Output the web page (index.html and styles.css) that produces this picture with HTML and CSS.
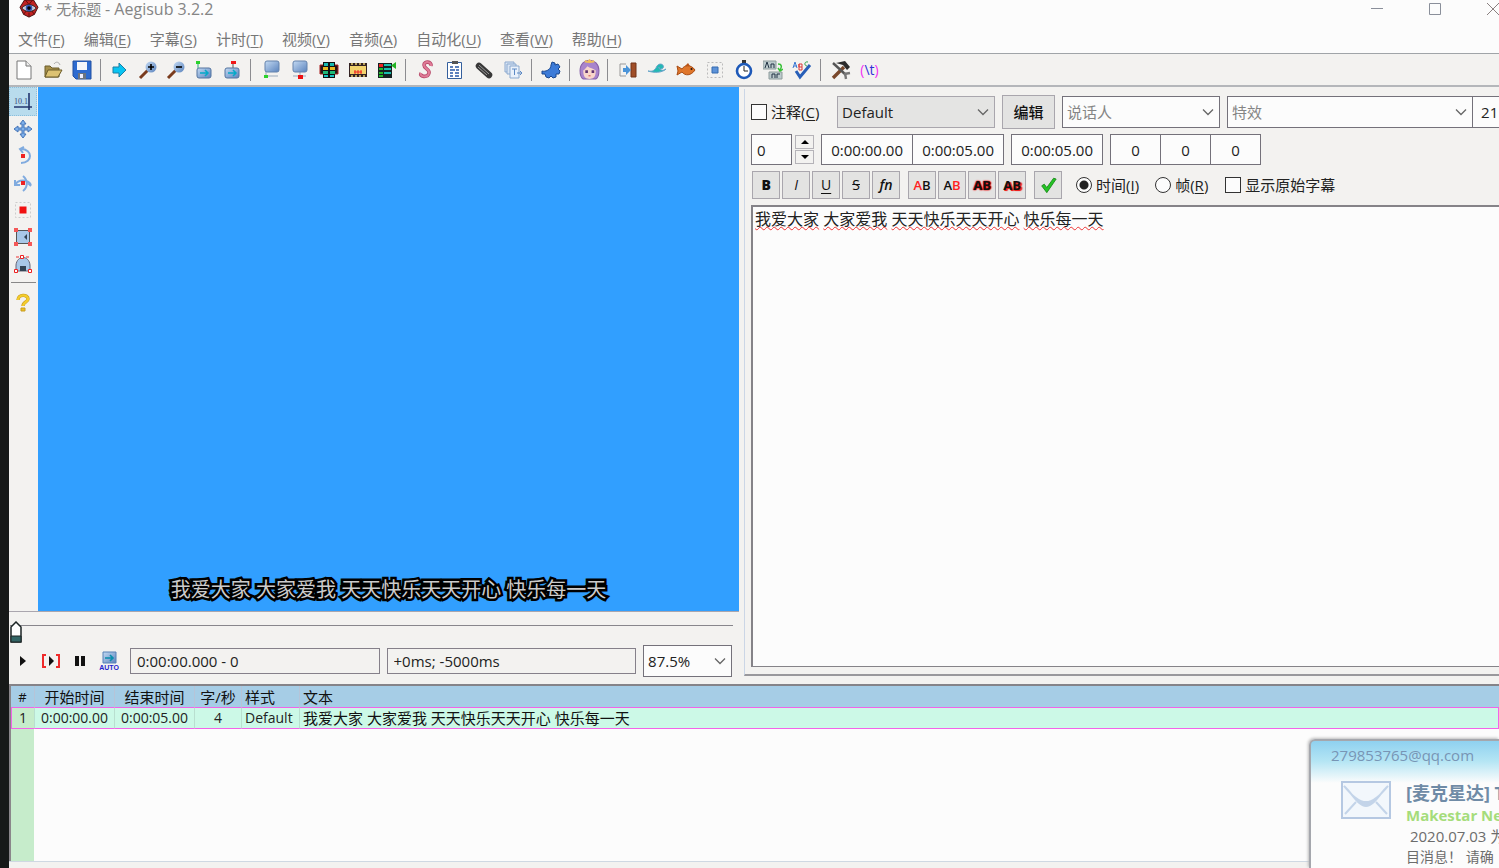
FILE: index.html
```html
<!DOCTYPE html>
<html lang="zh-CN">
<head>
<meta charset="utf-8">
<title>无标题 - Aegisub 3.2.2</title>
<link rel="stylesheet" href="styles.css">
</head>
<body>
<svg class="defs" aria-hidden="true">
  <defs>
    <linearGradient id="steel" x1="0" y1="0" x2="1" y2="1"><stop offset="0" stop-color="#c4daf3"/><stop offset="1" stop-color="#5a83bd"/></linearGradient>
    <symbol id="chev" viewBox="0 0 12 12"><path d="M1 3.5l5 5 5-5" fill="none" stroke="#666" stroke-width="1.3"/></symbol>
  </defs>
</svg>
<div class="window">
  <header class="titlebar">
    <svg class="app-icon" viewBox="0 0 20 20"><path d="M5 0h10l5 8-4 8-6 3-6-3-4-8z" fill="#c02222" stroke="#3a0a0a"/><path d="M6 0l4 5 4-5M4 16l3-4M16 16l-3-4M10 19v-5" stroke="#5c0d0d" fill="none"/><path d="M2 9c4-5 12-5 16 0-4 5-12 5-16 0z" fill="#c9c9d8" stroke="#222"/><circle cx="10" cy="9" r="3.600" fill="#3158b8"/><circle cx="10" cy="9" r="2" fill="#050505"/></svg>
    <h1 class="title">* 无标题 <span>- Aegisub 3.2.2</span></h1>
    <div class="caption-buttons">
      <button aria-label="最小化"><svg viewBox="0 0 12 12"><path d="M0 5.500h12" stroke="#8a8f9a"/></svg></button>
      <button aria-label="最大化"><svg viewBox="0 0 12 12"><path d="M.5.5h11v11H.5z" fill="none" stroke="#8a8f9a"/></svg></button>
      <button aria-label="关闭"><svg viewBox="0 0 12 12"><path d="M0 0l12 12M12 0L0 12" stroke="#8a8080"/></svg></button>
    </div>
  </header>
  <nav class="menubar">
    <button>文件(<u>F</u>)</button><button>编辑(<u>E</u>)</button><button>字幕(<u>S</u>)</button><button>计时(<u>T</u>)</button><button>视频(<u>V</u>)</button><button>音频(<u>A</u>)</button><button>自动化(<u>U</u>)</button><button>查看(<u>W</u>)</button><button>帮助(<u>H</u>)</button>
  </nav>
  <div class="toolbar" role="toolbar">
    <div class="group">
      <button aria-label="新建"><svg viewBox="0 0 20 20"><path d="M3 1h9l5 5v13H3z" fill="#fff" stroke="#777"/><path d="M12 1v5h5" fill="#eee" stroke="#777"/></svg></button>
      <button aria-label="打开"><svg viewBox="0 0 20 20"><path d="M2 17V6h5l2 2h7v9z" fill="#a58f4a" stroke="#6b5c2a"/><path d="M5 10h14l-4 7H2z" fill="#dcc272" stroke="#6b5c2a"/><path d="M11 4c2-3 5-2 6 1" fill="none" stroke="#aaa"/></svg></button>
      <button aria-label="保存"><svg viewBox="0 0 20 20"><path d="M1 1h18v18H4l-3-3z" fill="#2d6bd0" stroke="#2350a0"/><path d="M5 2h10v8H5z" fill="#f4f6fa"/><path d="M6 13h8v6H6z" fill="#6b7480"/><path d="M8 14h3v4H8z" fill="#eef"/></svg></button>
    </div>
    <i class="sep"></i>
    <div class="group compact">
      <button aria-label="跳转"><svg viewBox="0 0 20 20"><path d="M3 7h6V3l7 7-7 7v-4H3z" fill="#08c4f2" stroke="#1b7fa4"/></svg></button>
      <button aria-label="放大"><svg viewBox="0 0 20 20"><path d="M2 18l8-8" stroke="#7a3b1d" stroke-width="3"/><circle cx="13" cy="7" r="5.500" fill="url(#steel)"/><path d="M10 7h6M13 4v6" stroke="#000" stroke-width="1.600"/></svg></button>
      <button aria-label="缩小"><svg viewBox="0 0 20 20"><path d="M2 18l8-8" stroke="#7a3b1d" stroke-width="3"/><circle cx="13" cy="7" r="5.500" fill="url(#steel)"/><path d="M10 7h6" stroke="#000" stroke-width="1.600"/></svg></button>
      <button aria-label="跳到开始"><svg viewBox="0 0 20 20"><path d="M4 3v5" stroke="#28a878"/><path d="M2 1h4v3H2z" fill="#2cd22c"/><rect x="3" y="8" width="14" height="10" rx="2" fill="url(#steel)" stroke="#54749f"/><path d="M6 13h7M11 10l3 3-3 3" stroke="#05a9c9" stroke-width="1.500" fill="none"/></svg></button>
      <button aria-label="跳到结束"><svg viewBox="0 0 20 20"><path d="M11 3v5" stroke="#555"/><path d="M9 1h5v3H9z" fill="#f01818"/><rect x="3" y="8" width="14" height="10" rx="2" fill="url(#steel)" stroke="#54749f"/><path d="M6 13h7M11 10l3 3-3 3" stroke="#05a9c9" stroke-width="1.500" fill="none"/></svg></button>
    </div>
    <i class="sep"></i>
    <div class="group">
      <button aria-label="开始帧"><svg viewBox="0 0 20 20"><path d="M5 10v6h12" stroke="#9ab" fill="none"/><rect x="4" y="1" width="14" height="11" rx="2" fill="url(#steel)" stroke="#6483ad"/><path d="M3 15h4v3H3z" fill="#2cd22c"/></svg></button>
      <button aria-label="结束帧"><svg viewBox="0 0 20 20"><path d="M10 10v6M3 16h13" stroke="#9ab" fill="none"/><rect x="3" y="1" width="14" height="11" rx="2" fill="url(#steel)" stroke="#6483ad"/><path d="M8 15h5v4H8z" fill="#e11"/></svg></button>
      <button aria-label="选择可见行"><svg viewBox="0 0 20 20"><path d="M1 5h18v9H1z" fill="#2a1515" stroke="#a22"/><path d="M4 2h12v16H4z" fill="#111"/><path d="M5 3h4v3H5zM11 3h4v3h-4z" fill="#19b9b0"/><path d="M4 7h5v3H4zM11 7h5v3h-5z" fill="#e8b820"/><path d="M4 11h5v3H4zM11 11h5v3h-5z" fill="#1fb978"/><path d="M5 15h4v2H5zM11 15h4v2h-4z" fill="#1ac4c4"/></svg></button>
      <button aria-label="吸附到场景"><svg viewBox="0 0 20 20"><path d="M1 3h18v14H1z" fill="#322"/><path d="M2 6h16v8H2z" fill="#f2d36d"/><path d="M3 4h2m2 0h2m2 0h2m2 0h2M3 16h2m2 0h2m2 0h2m2 0h2" stroke="#e6cb72" stroke-width="1.500"/><path d="M6 12h8M7 10v4M10 10v4M13 10v4" stroke="#e22"/></svg></button>
      <button aria-label="平移"><svg viewBox="0 0 20 20"><path d="M1 3h14v15H1z" fill="#152222"/><path d="M2 4h4v3H2z" fill="#e22"/><path d="M7 4h7v2H7zM7 8h7v2H7zM7 12h7v2H7z" fill="#18bfae"/><path d="M2 8h4v2H2zM2 12h4v2H2zM2 15h4v2H2z" fill="#22b92b"/><path d="M19 2v7l-5-3.500z" fill="#24b324"/></svg></button>
    </div>
    <i class="sep"></i>
    <div class="group">
      <button aria-label="样式管理器"><svg viewBox="0 0 20 20"><path d="M15 6c1-5-7-5-7-1 0 4 6 4 5 8-1 5-10 4-8 0" fill="none" stroke="#b84a6a" stroke-width="3.600"/><path d="M15 6c1-5-7-5-7-1 0 4 6 4 5 8-1 5-10 4-8 0" fill="none" stroke="#e07c98" stroke-width="2"/></svg></button>
      <button aria-label="属性"><svg viewBox="0 0 20 20"><path d="M2.500 2.500h14v16h-14z" fill="#fff" stroke="#345f9d"/><path d="M7 1h6v3H7z" fill="#555"/><path d="M5 7h3m2 0h4M5 10h5m1 0h3M5 13h3m2 0h4M5 16h3m2 0h4" stroke="#2858a8" stroke-width="1.500"/></svg></button>
      <button aria-label="附件"><svg viewBox="0 0 20 20"><path d="M5 6l10 9" stroke="#383838" stroke-width="6.500" stroke-linecap="round"/><path d="M5 5l10 9M4 7l9 8" stroke="#999" fill="none"/></svg></button>
      <button aria-label="字体收集器"><svg viewBox="0 0 20 20"><path d="M2 2h9v10H2z" fill="#d9e5f4" stroke="#8ba9cf"/><path d="M4 4h9v10H4z" fill="#d9e5f4" stroke="#8ba9cf"/><path d="M7 6h9v12H7z" fill="#e9f1fb" stroke="#8ba9cf"/><path d="M9 9h5M11.500 9v6M14 13h5m-2-2l2 2-2 2" stroke="#5d8ac5" fill="none"/></svg></button>
    </div>
    <i class="sep"></i>
    <div class="group compact">
      <button aria-label="自动化"><svg viewBox="0 0 20 20"><path d="M10 5l1-3 3 1 0 2 3-1 2 3-2 2 2 2-1 3-3 0 0 3-3 1-2-2-2 2-3-1-1-3-3 0 0-3c3 1 9-1 9-6z" fill="#3c7bd8" stroke="#1b488f"/></svg></button>
    </div>
    <i class="sep"></i>
    <div class="group compact">
      <button aria-label="ASSDraw"><svg class="large" viewBox="0 0 20 20"><path d="M1 11C1-2 19-2 19 11c0 4-1 7-3 8H4c-2-1-3-4-3-8z" fill="#a884cc" stroke="#8660a8"/><path d="M4 11c2-1 3-3 4-4 2 2 6 2 8 4 0 7-3 8-6 8s-6-1-6-8z" fill="#f8d6ca"/><path d="M5 3l1-2 2 1 2-2 2 2 2-1 1 2c-3 1-7 1-10 0z" fill="#eebf5b"/><path d="M6 12h2.500M12 12h2.500" stroke="#5f3370" stroke-width="2.500"/><path d="M9 16h2" stroke="#c55"/></svg></button>
    </div>
    <i class="sep"></i>
    <div class="group">
      <button aria-label="平移时间"><svg viewBox="0 0 20 20"><path d="M8 4H2v12h6" fill="none" stroke="#999"/><path d="M13 3h5v14h-5z" fill="#a04e28" stroke="#713218"/><path d="M5 8h3V5l5 5-5 5v-3H5z" fill="#4b94d8"/></svg></button>
      <button aria-label="样式助手"><svg viewBox="0 0 20 20"><path d="M1 11c5 1 7-1 9-5 3-4 8-1 6 2-2 2-5 1-4-1 1 4 4 4 7 2-4 4-12 4-18 2z" fill="#22b9b4" stroke="#68a5ca"/></svg></button>
      <button aria-label="翻译助手"><svg viewBox="0 0 20 20"><path d="M1 6l5 3c2-4 9-5 13 1-4 6-10 6-13 2l-5 3 1-4z" fill="#df762b" stroke="#a84c14"/><path d="M9 6l3-3 2 3" fill="#b85419"/><circle cx="15.500" cy="9" r="1" fill="#211"/></svg></button>
      <button aria-label="重采样"><svg viewBox="0 0 20 20"><path d="M2.500 2.500h15v15h-15z" fill="none" stroke="#bbb" stroke-dasharray="2 2"/><path d="M7 7h6v6H7z" fill="#5d92d8" stroke="#346ab0"/></svg></button>
      <button aria-label="时间后续处理"><svg viewBox="0 0 20 20"><path d="M8 0h4v3H8z" fill="#333"/><circle cx="10" cy="11" r="7" fill="#fff" stroke="#1e59b8" stroke-width="2.600"/><path d="M10 6v5h4" stroke="#222" fill="none"/></svg></button>
      <button aria-label="汉字计时"><svg viewBox="0 0 20 20"><path d="M0 1h13v8H0zM6 12h13v7H6z" fill="#bccacc" stroke="#8e9c9c"/><path d="M2 8l2-6 2 6M8 8V4h3v4M9 18v-4h3v4M14 18v-4h3" stroke="#234" fill="none"/><path d="M15 4c4 0 4 3 2 6m-2-2l2 3 3-2" stroke="#37c137" fill="none" stroke-width="1.500"/></svg></button>
      <button aria-label="拼写检查"><svg viewBox="0 0 20 20"><path d="M1 8l2-6 2 6M2 6h3" stroke="#3976d2" fill="none"/><path d="M7 4v6h3V7H7V4h3v3" stroke="#dc3838" fill="none"/><path d="M16 2c-4-1-4 4-1 4" stroke="#35a54d" fill="none"/><path d="M4 11l4 6L18 5" stroke="#285fb8" stroke-width="3" fill="none"/></svg></button>
    </div>
    <i class="sep"></i>
    <div class="group">
      <button aria-label="选项"><svg viewBox="0 0 20 20"><path d="M2 18L13 7" stroke="#7a482b" stroke-width="3.400"/><path d="M5 3l9-2 5 6-3 3-4-5z" fill="#2b2b2b"/><path d="M2 3l13 12" stroke="#555" stroke-width="2.400"/><path d="M13 14l6-1M14 13l1 6" stroke="#777" stroke-width="2.400"/></svg></button>
      <button class="tag-mode" aria-label="切换标签"><b>(</b>\t<b>)</b></button>
    </div>
  </div>
  <main class="workspace">
    <section class="video-panel">
      <div class="stage">
        <div class="vtools" role="toolbar">
          <div class="vgroup">
            <button class="active" aria-label="标准"><svg viewBox="0 0 20 20"><path d="M1 16h18M16 2v17" stroke="#24366f" stroke-width="1.600"/><text x="1" y="13" class="coords">10.1</text></svg></button>
            <button aria-label="拖动"><svg viewBox="0 0 20 20"><path d="M10 1l3 4h-2v4h4V7l4 3-4 3v-2h-4v4h2l-3 4-3-4h2v-4H5v2l-4-3 4-3v2h4V5H7z" fill="#7fb0ea" stroke="#4575b8"/></svg></button>
            <button aria-label="旋转 Z"><svg viewBox="0 0 20 20"><path d="M8 3c12 0 12 14 0 14M11 1L7 3l3 4" fill="none" stroke="#80abdf" stroke-width="2"/><path d="M8 8h4v4H8z" fill="#e22"/></svg></button>
            <button aria-label="旋转 XY"><svg viewBox="0 0 20 20"><path d="M2 12c3-6 13-6 16 0M10 3c5 4 5 11 0 15M2 7v5h5M15 10l3 3" fill="none" stroke="#80abdf" stroke-width="2"/><path d="M8 8h4v4H8z" fill="#e22"/></svg></button>
            <button aria-label="缩放"><svg viewBox="0 0 20 20"><path d="M2.500 2.500h15v15h-15z" fill="none" stroke="#ccc" stroke-dasharray="2 2"/><path d="M6.500 6.500h7v7h-7z" fill="#f01010"/></svg></button>
            <button aria-label="矩形剪辑"><svg viewBox="0 0 20 20"><path d="M3.500 3.500h13v13h-13z" fill="#a9c8e8" stroke="#555"/><path d="M1 1h4v4H1zM15 1h4v4h-4zM1 15h4v4H1zM15 15h4v4h-4z" fill="#f45858"/><path d="M14 7l-3 3 3 3" fill="#345"/></svg></button>
            <button aria-label="矢量剪辑"><svg viewBox="0 0 20 20"><path d="M3 17V11c1-10 13-10 14 0v6z" fill="#a9c8e8" stroke="#667"/><path d="M3 3h14" stroke="#e33" stroke-dasharray="3 2"/><path d="M7 17v-5h6v5z" fill="#345"/><path d="M1.500 15.500h3v3h-3zM15.500 15.500h3v3h-3zM7.500 1.500h3v3h-3z" fill="#fff" stroke="#e22"/></svg></button>
          </div>
          <i class="hsep"></i>
          <button class="help" aria-label="帮助"><svg viewBox="0 0 20 20"><path d="M5 7c0-6 10-6 10-1 0 3-5 3-5 7" fill="none" stroke="#c89c22" stroke-width="3.400"/><path d="M5 7c0-6 10-6 10-1 0 3-5 3-5 7" fill="none" stroke="#f4cd2c" stroke-width="2.400"/><path d="M8 15h4v3H8z" fill="#eec21e" stroke="#c89c22"/></svg></button>
        </div>
        <div class="video"><p class="subtitle">我爱大家 大家爱我 天天快乐天天开心 快乐每一天</p></div>
      </div>
      <div class="seek"><input type="range" min="0" max="100" value="0" aria-label="视频位置"></div>
      <div class="transport">
        <button aria-label="播放"><svg viewBox="0 0 20 20"><path d="M8 5l6 5-6 5z" fill="#111"/></svg></button>
        <button aria-label="播放当前行"><svg viewBox="0 0 20 20"><path d="M8 5l5 5-5 5z" fill="#111"/><path d="M5 4H2v12h3M15 4h3v12h-3" stroke="#ef2b2b" stroke-width="2" fill="none"/></svg></button>
        <button aria-label="暂停"><svg viewBox="0 0 20 20"><path d="M5 5h4v10H5zM11 5h4v10h-4z" fill="#111"/></svg></button>
        <button aria-label="自动跳转"><svg viewBox="0 0 20 20"><path d="M4 1h13v11H4z" fill="url(#steel)" stroke="#5781b6"/><path d="M6 7h7m-2-3l3 3-3 3" stroke="#088eac" stroke-width="1.600" fill="none"/><text x="10" y="19" text-anchor="middle" class="auto">AUTO</text></svg></button>
        <input class="readout" readonly value="0:00:00.000 - 0" aria-label="时间与帧">
        <input class="readout" readonly value="+0ms; -5000ms" aria-label="相对时间">
        <div class="combo zoom"><select aria-label="缩放"><option>87.5%</option></select><svg><use href="#chev"/></svg></div>
      </div>
    </section>
    <section class="edit-panel">
      <div class="row row-style">
        <label class="check comment"><input type="checkbox"><span>注释(<u>C</u>)</span></label>
        <div class="combo style"><select aria-label="样式"><option>Default</option></select><svg><use href="#chev"/></svg></div>
        <button class="btn edit">编辑</button>
        <div class="combo actor"><input placeholder="说话人" aria-label="说话人"><svg><use href="#chev"/></svg></div>
        <div class="combo effect"><input placeholder="特效" aria-label="特效"><svg><use href="#chev"/></svg></div>
        <input class="field chars" value="21" readonly aria-label="字数">
      </div>
      <div class="row row-time">
        <input class="field layer" value="0" aria-label="层">
        <div class="spin"><button aria-label="增加"><svg viewBox="0 0 8 4"><path d="M0 4l4-4 4 4z"/></svg></button><button aria-label="减少"><svg viewBox="0 0 8 4"><path d="M0 0l4 4 4-4z"/></svg></button></div>
        <div class="joined"><input class="field time" value="0:00:00.00" aria-label="开始时间"><input class="field time" value="0:00:05.00" aria-label="结束时间"></div>
        <input class="field time" value="0:00:05.00" aria-label="持续时间">
        <div class="joined"><input class="field margin" value="0" aria-label="左边距"><input class="field margin" value="0" aria-label="右边距"><input class="field margin" value="0" aria-label="垂直边距"></div>
      </div>
      <div class="row row-format">
        <div class="fmt"><button class="btn bold">B</button><button class="btn italic">I</button><button class="btn under">U</button><button class="btn strike">S</button><button class="btn fn">fn</button></div>
        <div class="fmt"><button class="btn ab"><em>A</em>B</button><button class="btn ab">A<em>B</em></button><button class="btn ab outline">AB</button><button class="btn ab shadow">AB</button></div>
        <button class="btn commit" aria-label="提交"><svg viewBox="0 0 20 20"><path d="M2 11l3-2 3 4L16 2l3 1L8 19z" fill="#24c324" stroke="#168716"/></svg></button>
        <label class="check by-time"><input type="radio" name="unit" checked><span>时间(<u>I</u>)</span></label>
        <label class="check by-frame"><input type="radio" name="unit"><span>帧(<u>R</u>)</span></label>
        <label class="check original"><input type="checkbox"><span>显示原始字幕</span></label>
      </div>
      <div class="editor" role="textbox" contenteditable="true" spellcheck="false" aria-label="字幕文本"><span class="miss">我爱大家</span> <span class="miss">大家爱我</span> <span class="miss">天天快乐天天开心</span> <span class="miss">快乐每一天</span></div>
    </section>
  </main>
  <section class="grid">
    <table>
      <colgroup><col class="c-num"><col class="c-time"><col class="c-time"><col class="c-cps"><col class="c-style"><col></colgroup>
      <thead><tr><th>#</th><th>开始时间</th><th>结束时间</th><th>字/秒</th><th class="left">样式</th><th class="left">文本</th></tr></thead>
      <tbody><tr><td>1</td><td>0:00:00.00</td><td>0:00:05.00</td><td>4</td><td class="left">Default</td><td class="left">我爱大家 大家爱我 天天快乐天天开心 快乐每一天</td></tr></tbody>
    </table>
    <div class="gutter"></div>
  </section>
  <footer class="statusbar"></footer>
</div>
<aside class="popup">
  <div class="popup-head">279853765@qq.com</div>
  <div class="popup-body">
    <svg class="mail" viewBox="0 0 50 38"><path d="M1 1h48v36H1z" fill="#f2f7fc" stroke="#b5c8e2" stroke-width="2"/><path d="M3 5c8 7 14 20 22 20S39 12 47 5c-8 10-15 16-22 16S11 15 3 5z" fill="#c3d4e9" stroke="#c3d4e9" stroke-width="2"/><path d="M4 33l11-12M46 33L35 21" stroke="#c3d4e9" stroke-width="2"/></svg>
    <div class="popup-text"><strong>[麦克星达] T</strong><b>Makestar Ne</b><p>&nbsp;2020.07.03 为</p><p class="more">目消息！ 请确</p></div>
  </div>
</aside>
</body>
</html>
```
FILE: styles.css
```css
* { box-sizing: border-box; }
body {
  margin: 0;
  height: 100vh;
  overflow: hidden;
  padding-left: 9px;
  background: #171918;
  color: #222;
  font: 15px/20px "Open Sans", "Noto Sans CJK SC", sans-serif;
}
button, input, select { font: inherit; color: inherit; margin: 0; }
button { padding: 0; border: 0; background: none; }
u { text-underline-offset: 2px; }
.defs { position: absolute; width: 0; height: 0; }
.window { height: 100%; display: flex; flex-direction: column; background: #f3f2f0; overflow: hidden; }

.titlebar { height: 26px; display: flex; align-items: flex-start; background: #fcfcfc; padding-left: 10px; }
.app-icon { width: 20px; height: 18px; flex: none; }
.title { margin: 0 0 0 5px; flex: 1; font-size: 15px; font-weight: 400; line-height: 18px; color: #858585; white-space: nowrap; }
.title span { font-size: 16px; }
.caption-buttons { display: flex; gap: 46px; padding-top: 3px; flex: none; }
.caption-buttons button, .caption-buttons svg { display: block; width: 12px; height: 12px; }

.menubar { height: 28px; display: flex; gap: 19px; padding: 0 9px; background: #fcfcfc; border-bottom: 1px solid #a0a4a8; }
.menubar button { color: #777; white-space: nowrap; line-height: 27px; }

.toolbar { height: 33px; display: flex; align-items: center; border-bottom: 2px solid #b4b6ba; }
.group { display: flex; }
.group button { width: 29px; height: 28px; display: flex; align-items: center; justify-content: center; }
.compact button { width: 28px; }
.group svg { width: 20px; height: 20px; }
.group svg.large { width: 21px; height: 21px; }
.sep { width: 10px; height: 22px; background: linear-gradient(#8c8c90, #8c8c90) 4px 0 / 1px 100% no-repeat; }
.group .tag-mode { color: #3030d8; font-size: 14px; }
.tag-mode b { color: #f22df2; font-weight: 400; }

.workspace { flex: 1; min-height: 0; display: flex; }
.video-panel { flex: 0 0 49%; display: flex; flex-direction: column; min-width: 0; }
.stage { flex: 1; display: flex; border-bottom: 1px solid #aaa6ae; }
.vtools { width: 29px; flex: none; }
.vgroup { height: 190px; display: flex; flex-direction: column; }
.vtools button { width: 28px; flex: 1; display: flex; align-items: center; justify-content: center; }
.vtools svg { width: 20px; height: 20px; }
.vtools .active { background: #b9dced; border: 1px dotted #8cbfdc; }
.hsep { display: block; height: 1px; margin: 5px 2px 0; background: #888; }
.vtools .help { height: 40px; }
.coords { font: 8px "Liberation Serif", serif; fill: #35477c; }
.auto { font: 700 7px "Liberation Sans", sans-serif; fill: #2222cc; }
.video { flex: 1; background: #319fff; display: flex; align-items: flex-end; justify-content: center; }
.subtitle { margin: 0 0 6px; font-size: 20px; line-height: 30px; color: #ccc; -webkit-text-stroke: 5px #000; paint-order: stroke fill; white-space: nowrap; }

.seek { height: 32px; padding: 8px 6px 0 1px; }
.seek input { display: block; width: 100%; height: 24px; margin: 0; appearance: none; background: linear-gradient(#88868c, #88868c) 0 5px / 100% 1px no-repeat; }
.seek input::-webkit-slider-thumb { appearance: none; width: 12px; height: 22px; background: url("data:image/svg+xml,%3Csvg xmlns='http://www.w3.org/2000/svg' viewBox='0 0 12 22'%3E%3Cpath d='M1 21V6l5-5 5 5v15z' fill='%23fff' stroke='%231c2525' stroke-width='1.500'/%3E%3Cpath d='M1 15h10v6H1z' fill='%23326565' stroke='%231c2525'/%3E%3C/svg%3E") no-repeat; }
.transport { height: 40px; display: flex; align-items: center; gap: 7px; padding: 0 7px 7px 0; }
.transport button { width: 22px; height: 24px; flex: none; display: flex; align-items: center; justify-content: center; }
.transport button:first-child { margin-left: 2px; }
.transport svg { width: 20px; height: 20px; }
.transport button:nth-child(4) { margin-right: 3px; }
.readout { flex: 1; min-width: 0; height: 26px; padding: 0 6px; border: 1px solid #85808a; background: #f3f2f0; }

.combo { display: grid; align-items: center; height: 32px; background: #fcfcfc; border: 1px solid #74717a; flex: none; }
.combo > * { grid-area: 1 / 1; }
.combo select, .combo input { width: 100%; min-width: 0; height: 30px; appearance: none; border: 0; background: none; padding: 0 4px; outline: 0; }
.combo input::placeholder { color: #858585; opacity: 1; }
.combo svg { width: 12px; height: 12px; justify-self: end; margin-right: 5px; pointer-events: none; }
.combo.zoom { width: 89px; }

.edit-panel { flex: 1; min-width: 0; overflow: hidden; margin: 2px 0 8px 5px; padding: 6px 0 7px 6px; border-left: 1px solid #cbd6e6; border-bottom: 2px solid #99989c; display: flex; flex-direction: column; }
.row { display: flex; align-items: center; flex: none; }
.row-style { height: 34px; gap: 7px; }
.check { display: flex; align-items: center; gap: 4px; white-space: nowrap; flex: none; }
.check input { appearance: none; width: 16px; height: 16px; border: 1px solid #333; background: #fcfcfc; flex: none; }
.check input[type="radio"] { border-radius: 50%; }
.check input[type="radio"]:checked { background: radial-gradient(circle, #222 0 4px, #fcfcfc 5px); }
.comment { width: 79px; }
.combo.style { width: 158px; background: #e4e4e3; border-color: #a9a6ad; }
.combo.actor { width: 158px; }
.combo.effect { width: 246px; }
.btn { background: #e3e3e2; border: 1px solid #a9a6ad; color: #111; }
.btn.edit { width: 53px; height: 34px; font-weight: 500; flex: none; }
.field { height: 31px; padding: 0 6px; background: #fcfcfc; border: 1px solid #74717a; text-align: center; flex: none; }
.chars { width: 60px; height: 32px; padding-left: 8px; margin-left: -8px; text-align: left; }
.row-time { padding-top: 5px; gap: 7px; }
.layer { width: 41px; padding: 0 5px; text-align: left; }
.spin { display: flex; flex-direction: column; gap: 1px; margin-left: -4px; }
.spin button { width: 19px; height: 14px; display: flex; align-items: center; justify-content: center; border: 1px solid #b5b3b8; }
.spin svg { width: 8px; height: 4px; }
.joined { display: flex; }
.joined .field + .field { margin-left: -1px; }
.time { width: 92px; }
.margin { width: 51px; }
.row-format { padding-top: 5px; height: 34px; gap: 8px; padding-left: 1px; }
.fmt { display: flex; gap: 2px; }
.fmt .btn, .commit { width: 28px; height: 28px; font-size: 14px; line-height: 22px; }
.fmt .bold { font-weight: 800; }
.italic, .fn { font-style: italic; }
.fmt .fn { font-weight: 600; }
.under { text-decoration: underline; text-underline-offset: 3px; }
.strike { text-decoration: line-through; }
.fmt .ab { font-weight: 600; font-size: 13px; }
.ab em { color: #f22; font-style: normal; }
.fmt .outline { font-weight: 700; text-shadow: 0 0 1px #e00, 0 0 2px #e00, 1px 0 1px #e00; }
.fmt .shadow { font-weight: 700; text-shadow: 1px 1px 0 #e22, 2px 1px 1px #e22; }
.commit { display: flex; align-items: center; justify-content: center; }
.commit svg { width: 17px; height: 18px; flex: none; }
.by-time { margin-left: 6px; }
.by-frame { margin-left: 8px; }
.original { margin-left: 9px; }
.editor { flex: 1; margin-top: 6px; padding: 1px 2px; background: #fcfcfc; border: 2px solid #858388; border-width: 2px 0 1px 2px; font-size: 16px; line-height: 22px; outline: 0; }
.miss { text-decoration: underline wavy #e33 1px; text-underline-offset: 1px; text-decoration-skip-ink: none; }

.grid { height: 177px; display: flex; flex-direction: column; background: #fcfcfc; border-top: 2px solid #858388; border-left: 2px solid #8a868a; }
.grid table { width: 100%; border-collapse: separate; border-spacing: 0; table-layout: fixed; white-space: nowrap; }
.c-num { width: 24px; }
.c-time { width: 80px; }
.c-cps { width: 47px; }
.c-style { width: 58px; }
.grid th { height: 21px; padding: 0; font-weight: 400; background: #a6cde6; border-right: 1px solid #b6c4d8; line-height: 20px; color: #111; }
.grid td { height: 22px; padding: 0; text-align: center; background: #ccf9e7; border-top: 1px solid #f264e8; border-bottom: 1px solid #f264e8; border-right: 1px solid #b9dfd0; line-height: 20px; font-size: 14px; }
.grid td:first-child { background: #c6eccb; border-left: 1px solid #f264e8; }
.grid td:last-child { font-size: 15px; border-right-color: #f264e8; color: #111; }
.grid th:first-child { font-size: 13px; }
.grid th:last-child { border-right: 0; }
.grid .left { text-align: left; padding-left: 3px; }
.gutter { flex: 1; width: 23px; background: #c6eccb; }
.statusbar { height: 7px; flex: none; border-top: 1px solid #cfd8e2; }

.popup { position: absolute; right: 0; bottom: 0; width: 190px; height: 129px; overflow: hidden; border: 2px solid #a5a7ad; border-width: 2px 0 0 2px; border-radius: 6px 0 0 0; background: linear-gradient(#8fd1f0 0, #b4e5f4 20px, #fcfcfc 42px); white-space: nowrap; box-shadow: -1px -1px 3px #bbb; }
.popup-head { padding: 4px 0 0 20px; color: #7895b5; line-height: 20px; }
.popup-body { display: flex; gap: 15px; padding: 16px 0 0 30px; }
.mail { width: 50px; height: 38px; flex: none; }
.popup-text { line-height: 22px; color: #6c6c6c; }
.popup-text strong, .popup-text b { display: block; }
.popup-text strong { font-size: 18px; line-height: 24px; color: #6f8ba6; }
.popup-text b { line-height: 20px; color: #a5dc7b; }
.popup-text p { margin: 0; }
.popup-text .more { font-size: 14px; line-height: 20px; }
```
